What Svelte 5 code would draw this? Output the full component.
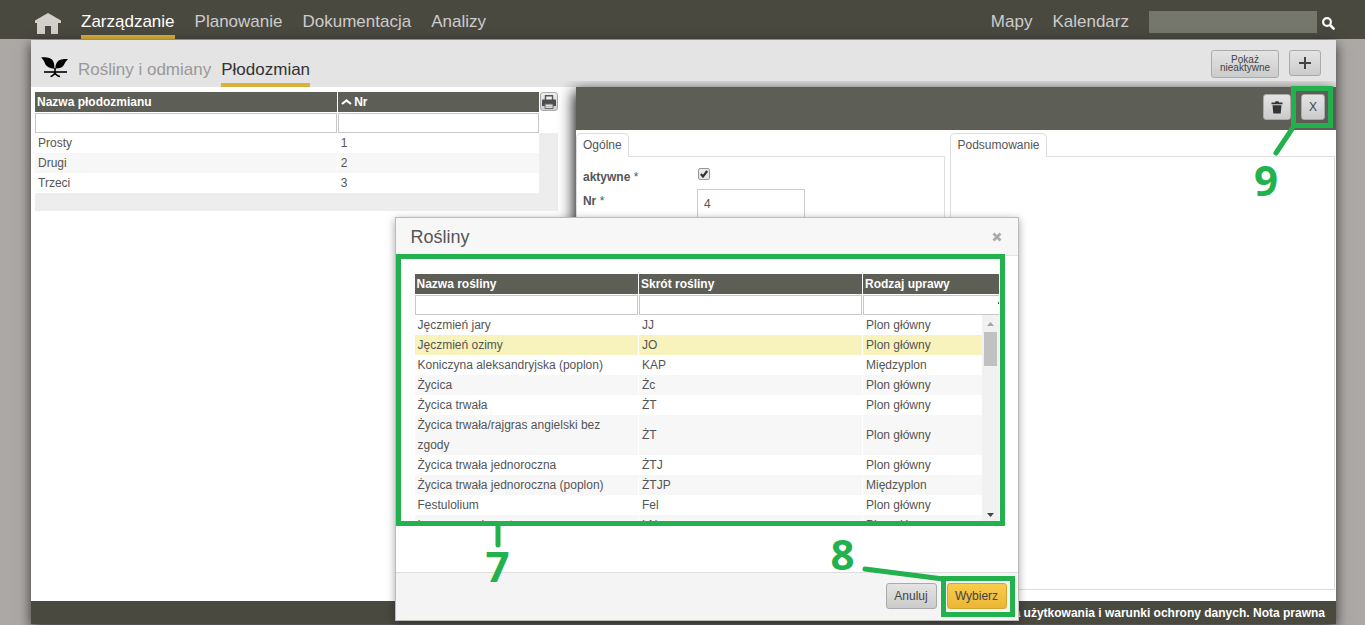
<script>
  const mainMenu = ['Zarządzanie', 'Planowanie', 'Dokumentacja', 'Analizy'];
  const sideMenu = ['Mapy', 'Kalendarz'];
  const subMenu = ['Rośliny i odmiany', 'Płodozmian'];

  const rotations = [
    { name: 'Prosty', nr: 1 },
    { name: 'Drugi', nr: 2 },
    { name: 'Trzeci', nr: 3 }
  ];

  const crops = [
    { name: 'Jęczmień jary', short: 'JJ', kind: 'Plon główny' },
    { name: 'Jęczmień ozimy', short: 'JO', kind: 'Plon główny' },
    { name: 'Koniczyna aleksandryjska (poplon)', short: 'KAP', kind: 'Międzyplon' },
    { name: 'Życica', short: 'Żc', kind: 'Plon główny' },
    { name: 'Życica trwała', short: 'ŻT', kind: 'Plon główny' },
    { name: 'Życica trwała/rajgras angielski bez zgody', short: 'ŻT', kind: 'Plon główny' },
    { name: 'Życica trwała jednoroczna', short: 'ŻTJ', kind: 'Plon główny' },
    { name: 'Życica trwała jednoroczna (poplon)', short: 'ŻTJP', kind: 'Międzyplon' },
    { name: 'Festulolium', short: 'Fel', kind: 'Plon główny' },
    { name: 'Lucerna nerkowata', short: 'LN', kind: 'Plon główny' }
  ];

  let selected = $state(1);
  let active = $state(true);
  let nr = $state('4');
</script>

<div class="page">
  <header class="topbar">
    <a class="home" href="#home" aria-label="Start">
      <svg width="26" height="21" viewBox="0 0 26 21">
        <path d="M13 0 0 7.5V10H2v11h8v-8h6v8h7V10h3V7.5z" fill="#d3cfcd" />
      </svg>
    </a>
    <nav class="menu">
      {#each mainMenu as item, i}
        <a href="#{item}" class:current={i === 0}>{item}</a>
      {/each}
    </nav>
    <nav class="menu right">
      {#each sideMenu as item}
        <a href="#{item}">{item}</a>
      {/each}
    </nav>
    <input class="search" type="text" aria-label="Szukaj" />
    <button class="search-btn" aria-label="Szukaj">
      <svg width="13" height="13" viewBox="0 0 13 13" fill="none" stroke="#fff">
        <circle cx="5" cy="5" r="3.9" stroke-width="2.1" />
        <path d="M8 8l3.6 3.6" stroke-width="2.6" stroke-linecap="round" />
      </svg>
    </button>
  </header>

  <main class="sheet">
    <div class="subbar">
      <svg class="plant" width="27" height="21" viewBox="0 0 27 21">
        <path d="M0 .5C4-.3 9.500 0 11.800 3.500c1.400 2.300 1.600 5 1.600 8C9 11.500 5.500 10 4 6.500 3.200 4.300 2 2 0 .5z" />
        <path d="M27 2.300c-4-.6-8.500-.3-10.700 2.700-1.600 2.200-1.900 4-1.900 6.500 4 0 7.100-.7 8.600-3.700 1-2.200 2-4 4-5.500z" />
        <path d="M3 15h23" stroke="#000" stroke-width="1.600" />
        <path d="M14 11v5.500M14 16.500c-1.500 1-2.500 2.800-4.500 3M14 16.500c1.500 1 2.500 2.800 5 3" fill="none" stroke="#000" stroke-width="1.600" />
      </svg>
      <nav class="submenu">
        {#each subMenu as item, i}
          <a href="#{item}" class:current={i === 1}>{item}</a>
        {/each}
      </nav>
      <button class="btn small">Pokaż nieaktywne</button>
      <button class="btn add" aria-label="Dodaj">
        <svg width="12" height="12" viewBox="0 0 12 12"><path d="M6 0v12M0 6h12" stroke="#444" stroke-width="2" /></svg>
      </button>
    </div>

    <div class="panes">
      <section class="list">
        <div class="list-head">
          <table class="grid">
            <colgroup><col class="wide" /><col /></colgroup>
            <thead>
              <tr>
                <th>Nazwa płodozmianu</th>
                <th>
                  <svg width="11" height="6" viewBox="0 0 11 6"><path d="M1 5l4.500-3.500L10 5" fill="none" stroke="#fff" stroke-width="2.200" /></svg>
                  Nr
                </th>
              </tr>
              <tr class="filters">
                <td><input type="text" aria-label="Filtr: nazwa płodozmianu" /></td>
                <td><input type="text" aria-label="Filtr: nr" /></td>
              </tr>
            </thead>
          </table>
          <button class="print" aria-label="Drukuj">
            <svg width="14" height="14" viewBox="0 0 14 14">
              <path d="M3.500 5V.7h7V5" fill="#eee" stroke="#555" stroke-width="1.400" />
              <path d="M0 5.500q0-1 1-1h12q1 0 1 1V11H0z" fill="#4d4d4d" />
              <path d="M3 9h8v4.500H3z" fill="#ddd" stroke="#666" />
              <path d="M4.500 11.500h5" stroke="#999" stroke-dasharray="1 1" />
            </svg>
          </button>
        </div>
        <div class="list-body">
          <table class="grid">
            <colgroup><col class="wide" /><col /></colgroup>
            <tbody>
              {#each rotations as row}
                <tr><td>{row.name}</td><td>{row.nr}</td></tr>
              {/each}
            </tbody>
          </table>
        </div>
      </section>

      <section class="detail">
        <div class="toolbar">
          <button class="btn" aria-label="Usuń">
            <svg width="12" height="13" viewBox="0 0 11 13" fill="#333">
              <path d="M0 1.500h3.500L4 .3h3l.5 1.200H11v1.700H0zM1 4.200h9l-.8 8.300H1.800z" />
            </svg>
          </button>
          <div class="marked">
            <button class="btn close-pane">X</button>
            <div class="frame nine"></div>
            <svg class="pointer nine" width="22" height="30" viewBox="0 0 22 30"><path d="M19 3 3 27" /></svg>
            <span class="step nine">9</span>
          </div>
        </div>
        <div class="cards">
          <div class="card">
            <h3>Ogólne</h3>
            <form class="fields">
              <label for="active">aktywne <i>*</i></label>
              <span class="tick">
                <input id="active" type="checkbox" bind:checked={active} />
                {#if active}
                  <svg width="8" height="8" viewBox="0 0 8 8"><path d="M.8 4l2.200 2.500L7.200 1" fill="none" stroke="#333" stroke-width="2.200" /></svg>
                {/if}
              </span>
              <label for="nr">Nr <i>*</i></label>
              <input id="nr" class="nr" type="text" bind:value={nr} />
            </form>
          </div>
          <div class="card">
            <h3>Podsumowanie</h3>
            <div class="fields"></div>
          </div>
        </div>
      </section>
    </div>

    <footer>
      <a href="#umowa">Umowa użytkowania i warunki ochrony danych</a>. <a href="#nota">Nota prawna</a>
    </footer>
  </main>

  <div class="modal" role="dialog" aria-labelledby="modal-title">
    <div class="modal-head">
      <h2 id="modal-title">Rośliny</h2>
      <button class="x" aria-label="Zamknij">
        <svg width="10" height="10" viewBox="0 0 10 10"><path d="M1.500 1.500l7 7M8.500 1.500l-7 7" stroke="#aaa" stroke-width="2.800" /></svg>
      </button>
    </div>
    <div class="modal-body">
      <div class="crops">
        <table class="grid">
          <colgroup><col class="crop" /><col class="crop" /><col /></colgroup>
          <thead>
            <tr><th>Nazwa rośliny</th><th>Skrót rośliny</th><th>Rodzaj uprawy</th></tr>
            <tr class="filters">
              <td><input type="text" aria-label="Filtr: nazwa rośliny" /></td>
              <td><input type="text" aria-label="Filtr: skrót rośliny" /></td>
              <td class="cut"><select aria-label="Filtr: rodzaj uprawy"><option></option><option>Plon główny</option><option>Międzyplon</option></select></td>
            </tr>
          </thead>
        </table>
        <div class="scroller">
          <table class="grid">
            <colgroup><col class="crop" /><col class="crop" /><col /></colgroup>
            <tbody>
              {#each crops as crop, i}
                <tr class:selected={selected === i} onclick={() => (selected = i)}>
                  <td>{crop.name}</td><td>{crop.short}</td><td>{crop.kind}</td>
                </tr>
              {/each}
            </tbody>
          </table>
          <div class="scrollbar">
            <svg width="7" height="4" viewBox="0 0 7 4"><path d="M0 4 3.500 0 7 4z" fill="#a3a3a3" /></svg>
            <div class="thumb"></div>
            <svg width="7" height="4" viewBox="0 0 7 4"><path d="M0 0 3.500 4 7 0z" fill="#444" /></svg>
          </div>
        </div>
      </div>
      <div class="frame seven"></div>
      <svg class="pointer seven" width="6" height="22" viewBox="0 0 6 22"><path d="M3 0v19" /></svg>
      <span class="step seven">7</span>
    </div>
    <div class="modal-foot">
      <button class="btn cancel">Anuluj</button>
      <div class="marked">
        <button class="btn primary">Wybierz</button>
        <div class="frame eight"></div>
        <svg class="pointer eight" width="84" height="16" viewBox="0 0 84 16"><path d="M3 3l78 10" /></svg>
        <span class="step eight">8</span>
      </div>
    </div>
  </div>
</div>

<style>
  :global(body) {
    margin: 0;
    background: #aca8a6;
  }

  .page {
    position: relative;
    display: flex;
    flex-direction: column;
    height: 100vh;
    min-height: 625px;
    overflow: hidden;
    background: #aca8a6;
    color: #555;
    font: 12px/20px "Liberation Sans", Arial, sans-serif;
  }

  .page * {
    box-sizing: border-box;
  }

  button,
  input,
  select {
    font: inherit;
    color: inherit;
  }

  a {
    color: inherit;
    text-decoration: none;
  }

  svg {
    display: block;
  }

  /* top bar */
  .topbar {
    display: flex;
    align-items: center;
    height: 39px;
    flex: none;
    padding: 0 30px 0 35px;
    background: #4a4940;
    color: #ccc;
  }

  .home {
    margin: 7px 20px 0 0;
  }

  .menu {
    display: flex;
    gap: 20px;
    height: 39px;
    font-size: 17px;
    line-height: 43px;
  }

  .menu .current {
    color: #fff;
    border-bottom: 4px solid #dcb138;
  }

  .right {
    margin-left: auto;
  }

  .search {
    width: 168px;
    height: 22px;
    margin: 5px 5px 0 20px;
    border: 0;
    background: #75766c;
  }

  .search-btn {
    padding: 0;
    margin-top: 7px;
    border: 0;
    background: none;
  }

  /* sheet */
  .sheet {
    display: flex;
    flex-direction: column;
    flex: 1;
    margin: 1px 29px 1px 31px;
    background: #fff;
    box-shadow: 0 4px 12px rgba(0, 0, 0, 0.7);
  }

  .subbar {
    display: flex;
    align-items: flex-start;
    flex: none;
    height: 47px;
    padding: 0 15px 0 10px;
    background: #e4e4e4;
  }

  .plant {
    margin: 17px 10px 0 0;
  }

  .submenu {
    display: flex;
    gap: 10px;
    flex: 1;
    height: 47px;
    color: #999;
    font-size: 17px;
    line-height: 59px;
  }

  .submenu .current {
    color: #333;
    border-bottom: 4px solid #dcb138;
  }

  .btn {
    padding: 0 7px;
    height: 26px;
    border: 1px solid #aaa;
    border-radius: 3px;
    background: linear-gradient(#e4e4e4, #cbcbcb);
    color: #444;
  }

  .small {
    width: 68px;
    height: 28px;
    margin: 10px 10px 0 0;
    padding: 0 4px;
    font-size: 10px;
    line-height: 8px;
  }

  .add {
    width: 32px;
    margin-top: 10px;
    padding: 0 9px;
  }

  .panes {
    display: flex;
    flex: 1;
  }

  .list {
    flex: none;
    width: 41.76%;
    padding: 5px 18px 0 4px;
  }

  .detail {
    display: flex;
    flex-direction: column;
    flex: 1;
    background: #fff;
    box-shadow: -2px 4px 14px rgba(0, 0, 0, 0.95);
    clip-path: inset(-6px 0 0 -20px);
  }

  /* grids */
  .grid {
    width: 100%;
    border-collapse: collapse;
    table-layout: fixed;
  }

  .wide {
    width: 60%;
  }

  .crop {
    width: 224px;
  }

  th {
    height: 20px;
    padding: 0 2px;
    border-right: 1px solid #fff;
    background: #5d5e56;
    color: #fff;
    text-align: left;
    white-space: nowrap;
  }

  th svg {
    display: inline-block;
    margin: 0 -1px 1px 1px;
  }

  td {
    padding: 0 3px;
    border-right: 1px solid #fff;
  }

  th:last-child,
  td:last-child {
    border-right: 0;
  }

  tbody tr {
    background: #fff;
  }

  tbody tr:nth-child(even) {
    background: #f7f7f7;
  }

  tbody tr.selected {
    background: #f8f2bd;
  }

  .filters td {
    padding: 1px 0 0;
  }

  .filters input,
  .filters select {
    display: block;
    width: 100%;
    height: 20px;
    border: 1px solid #c8c8c8;
    border-radius: 0;
    background: #fff;
    appearance: none;
  }

  .filters .cut select {
    border-right: 0;
    background: linear-gradient(#555, #555) right 6px / 1px 2px no-repeat #fff;
  }

  .list-head {
    display: flex;
    align-items: flex-start;
    gap: 1px;
  }

  .print {
    flex: none;
    width: 18px;
    height: 19px;
    padding: 0 1px;
    border: 1px solid #aaa;
    border-radius: 3px;
    background: linear-gradient(#eee, #ccc);
  }

  .list-body {
    padding: 0 19px 18px 0;
    background: #ededed;
  }

  /* detail pane */
  .toolbar {
    display: flex;
    align-items: center;
    justify-content: flex-end;
    gap: 10px;
    height: 43px;
    padding: 0 11px 3px 0;
    background: #5d5e56;
  }

  .close-pane {
    width: 24px;
    padding: 0;
  }

  .marked {
    position: relative;
  }

  .cards {
    display: flex;
    gap: 5px;
    flex: 1;
    padding: 3px 1px 11px 0;
  }

  .card {
    display: flex;
    flex-direction: column;
    align-items: flex-start;
    flex: 369;
  }

  .card + .card {
    flex: 384;
  }

  h3 {
    position: relative;
    height: 24px;
    margin: 0 0 -1px;
    padding: 0 6px;
    border: 1px solid #ddd;
    border-bottom: 0;
    border-radius: 5px 5px 0 0;
    background: #fff;
    font-size: 12px;
    font-weight: normal;
    line-height: 22px;
  }

  .fields {
    display: grid;
    grid-template-columns: 114px 108px;
    grid-template-rows: 24px 30px;
    align-content: start;
    flex: 1;
    width: 100%;
    padding: 8px 6px;
    border: 1px solid #ddd;
  }

  label {
    font-weight: bold;
    line-height: 24px;
  }

  label i {
    font-style: normal;
    font-weight: normal;
  }

  .tick {
    position: relative;
    width: 12px;
    height: 12px;
    margin: 3px 1px;
  }

  .tick input {
    display: block;
    width: 12px;
    height: 12px;
    margin: 0;
    border: 1px solid #999;
    border-radius: 2px;
    background: #e8e8e8;
    appearance: none;
  }

  .tick svg {
    position: absolute;
    inset: 2px;
    pointer-events: none;
  }

  .nr {
    height: 30px;
    padding: 0 6px;
    border: 1px solid #ccc;
  }

  footer {
    flex: none;
    height: 23px;
    padding-right: 11px;
    background: #4a4940;
    color: #fff;
    font-weight: bold;
    line-height: 24px;
    text-align: right;
  }

  /* crop picker */
  .modal {
    position: absolute;
    top: 217px;
    left: calc(50% - 288px);
    width: 624px;
    border: 1px solid #bbb;
    background: #fff;
    box-shadow: 0 2px 8px rgba(0, 0, 0, 0.35);
  }

  .modal-head {
    display: flex;
    align-items: center;
    justify-content: space-between;
    height: 38px;
    padding: 0 16px 0 15px;
    border-bottom: 1px solid #e5e5e5;
    background: #f7f7f7;
  }

  h2 {
    margin: 0;
    font-size: 18px;
    font-weight: normal;
  }

  .x {
    padding: 0;
    border: 0;
    background: none;
  }

  .modal-body {
    position: relative;
    height: 316px;
    padding: 18px 19px 0 19px;
  }

  .crops {
    height: 247px;
    overflow: hidden;
  }

  .scroller {
    display: flex;
    height: 206px;
    overflow: hidden;
  }

  .scrollbar {
    display: flex;
    flex-direction: column;
    align-items: center;
    flex: none;
    width: 17px;
    padding: 7px 0 4px;
    background: #f1f1f1;
  }

  .thumb {
    width: 13px;
    height: 34px;
    margin: 6px 0 auto;
    background: #c1c1c1;
  }

  .modal-foot {
    display: flex;
    justify-content: flex-end;
    gap: 10px;
    height: 48px;
    padding: 10px 11px;
    border-top: 1px solid #ddd;
    background: #f4f4f4;
  }

  .cancel {
    min-width: 51px;
  }

  .primary {
    width: 60px;
    padding: 0;
    border-color: #d6a62f;
    background: linear-gradient(#f9cc4b, #eab735);
  }

  /* numbered hints */
  .frame,
  .pointer,
  .step {
    position: absolute;
    pointer-events: none;
  }

  .frame {
    border: 5px solid #22b14c;
  }

  .frame.seven {
    inset: -2px 13px 46px 0;
  }

  .frame.eight {
    inset: -7px -8px -7px -6px;
  }

  .frame.nine {
    inset: -8px;
    left: -10px;
  }

  .pointer {
    fill: none;
    stroke: #22b14c;
    stroke-width: 5px;
    stroke-linecap: round;
  }

  .pointer.seven {
    top: 270px;
    left: 99px;
  }

  .pointer.eight {
    top: -17px;
    right: 61px;
  }

  .pointer.nine {
    top: 32px;
    right: 30px;
  }

  .step {
    color: #22b14c;
    font: bold 42px/42px "Noto Sans", "Open Sans", sans-serif;
  }

  .step.seven {
    top: 289px;
    left: 90px;
  }

  .step.eight {
    top: -50px;
    right: 152px;
  }

  .step.nine {
    top: 65px;
    right: 47px;
  }
</style>
